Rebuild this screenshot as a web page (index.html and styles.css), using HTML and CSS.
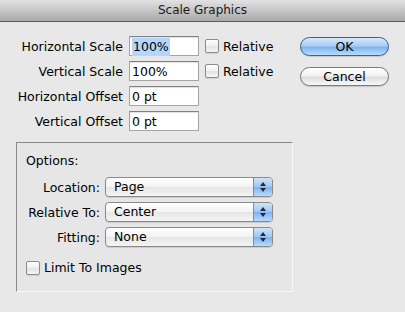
FILE: index.html
```html
<!DOCTYPE html>
<html lang="en">
<head>
  <meta charset="UTF-8" />
  <title>Scale Graphics</title>
  <link rel="stylesheet" href="styles.css">
</head>
<body>
  <div class="window">
    <div class="titlebar">Scale Graphics</div>

    <div class="content">
      <div class="top">
        <div class="form">
          <label class="lbl">Horizontal Scale</label>
          <div class="field"><span class="sel">100%</span></div>
          <div class="check"><span class="box"></span>Relative</div>

          <label class="lbl">Vertical Scale</label>
          <div class="field">100%</div>
          <div class="check"><span class="box"></span>Relative</div>

          <label class="lbl">Horizontal Offset</label>
          <div class="field">0 pt</div>
          <div></div>

          <label class="lbl">Vertical Offset</label>
          <div class="field">0 pt</div>
          <div></div>
        </div>

        <div class="buttons">
          <div class="btn primary">OK</div>
          <div class="btn">Cancel</div>
        </div>
      </div>

      <div class="group">
        <div class="group-title">Options:</div>
        <div class="popups">
          <label class="plbl">Location:</label>
          <div class="popup"><span class="pval">Page</span><span class="arrows"><i class="up"></i><i class="down"></i></span></div>

          <label class="plbl">Relative To:</label>
          <div class="popup"><span class="pval">Center</span><span class="arrows"><i class="up"></i><i class="down"></i></span></div>

          <label class="plbl">Fitting:</label>
          <div class="popup"><span class="pval">None</span><span class="arrows"><i class="up"></i><i class="down"></i></span></div>
        </div>
        <div class="check limit"><span class="box"></span>Limit To Images</div>
      </div>
    </div>
  </div>
</body>
</html>
```

FILE: styles.css
```css
* {
  box-sizing: border-box;
  margin: 0;
  padding: 0;
}

body {
  background: #e8e8e8;
  font-family: 'DejaVu Sans', 'Liberation Sans', sans-serif;
  font-size: 12.5px;
  color: #000;
}

.window {
  width: 405px;
  height: 312px;
  background: #e8e8e8;
}

.titlebar {
  height: 22px;
  line-height: 21px;
  font-size: 12px;
  text-align: center;
  color: #1a1a1a;
  background: linear-gradient(#e2e2e2, #a9a9a9);
  border-bottom: 1px solid #595959;
}

.content {
  padding-top: 14px;
}

.top {
  display: flex;
}

.form {
  display: grid;
  grid-template-columns: 123px 70px auto;
  grid-auto-rows: 20px;
  column-gap: 6px;
  row-gap: 5px;
  align-items: center;
}

.lbl {
  text-align: right;
}

.field {
  height: 20px;
  line-height: 19px;
  padding-left: 2px;
  background: #fff;
  border: 1px solid #a5a5a5;
  border-top-color: #808080;
  box-shadow: inset 0 1px 1px rgba(0,0,0,0.12);
}

.sel {
  background: #b5d5fd;
  padding: 1px 1px 2px;
}

.check {
  display: flex;
  align-items: center;
}

.box {
  display: inline-block;
  width: 14px;
  height: 14px;
  margin-right: 4px;
  border: 1px solid #8c8c8c;
  border-radius: 2px;
  background: linear-gradient(#ffffff, #f0f0f0 50%, #e2e2e2 51%, #f6f6f6);
  box-shadow: 0 1px 1px rgba(0,0,0,0.1);
}

.buttons {
  margin-left: auto;
  margin-right: 16px;
  margin-top: 1px;
  display: flex;
  flex-direction: column;
  gap: 11px;
}

.btn {
  width: 89px;
  height: 19px;
  line-height: 17px;
  text-align: center;
  border: 1px solid #7a7a7a;
  border-radius: 10px;
  background: linear-gradient(#ffffff, #f2f2f2 45%, #dedede 55%, #f8f8f8);
  box-shadow: 0 1px 1px rgba(0,0,0,0.15);
}

.btn.primary {
  border-color: #3f5f94;
  background: linear-gradient(#d6e8fb, #a9cdf5 45%, #7fb5ee 55%, #b9dcfc);
}

.group {
  margin: 11px 0 0 16px;
  width: 277px;
  height: 150px;
  border: 1px solid #f8f8f8;
  border-top-color: #8a8a8a;
  border-left-color: #8a8a8a;
  padding: 9px 0 0 9px;
  background: #e6e6e6;
}

.group-title {
  line-height: 18px;
}

.popups {
  margin-top: 7px;
  display: grid;
  grid-template-columns: 74px 168px;
  grid-auto-rows: 20px;
  column-gap: 5px;
  row-gap: 5px;
  align-items: center;
}

.plbl {
  text-align: right;
}

.popup {
  height: 20px;
  display: flex;
  border: 1px solid #8a8a8a;
  border-radius: 4px;
  overflow: hidden;
  background: linear-gradient(#ffffff, #f3f3f3 50%, #e6e6e6 51%, #f4f4f4);
  box-shadow: 0 1px 1px rgba(0,0,0,0.12);
}

.pval {
  flex: 1;
  line-height: 18px;
  padding-left: 8px;
}

.arrows {
  width: 19px;
  border-left: 1px solid #6f8fbf;
  background: linear-gradient(#cfe3fa, #9fc6f2 50%, #7db2ee 51%, #b8dafc);
  display: flex;
  flex-direction: column;
  align-items: center;
  justify-content: center;
  gap: 2px;
}

.up, .down {
  width: 0;
  height: 0;
  border-left: 3px solid transparent;
  border-right: 3px solid transparent;
}

.up {
  border-bottom: 4px solid #1c2c48;
}

.down {
  border-top: 4px solid #1c2c48;
}

.limit {
  margin: 13px 0 0 0;
}
```
